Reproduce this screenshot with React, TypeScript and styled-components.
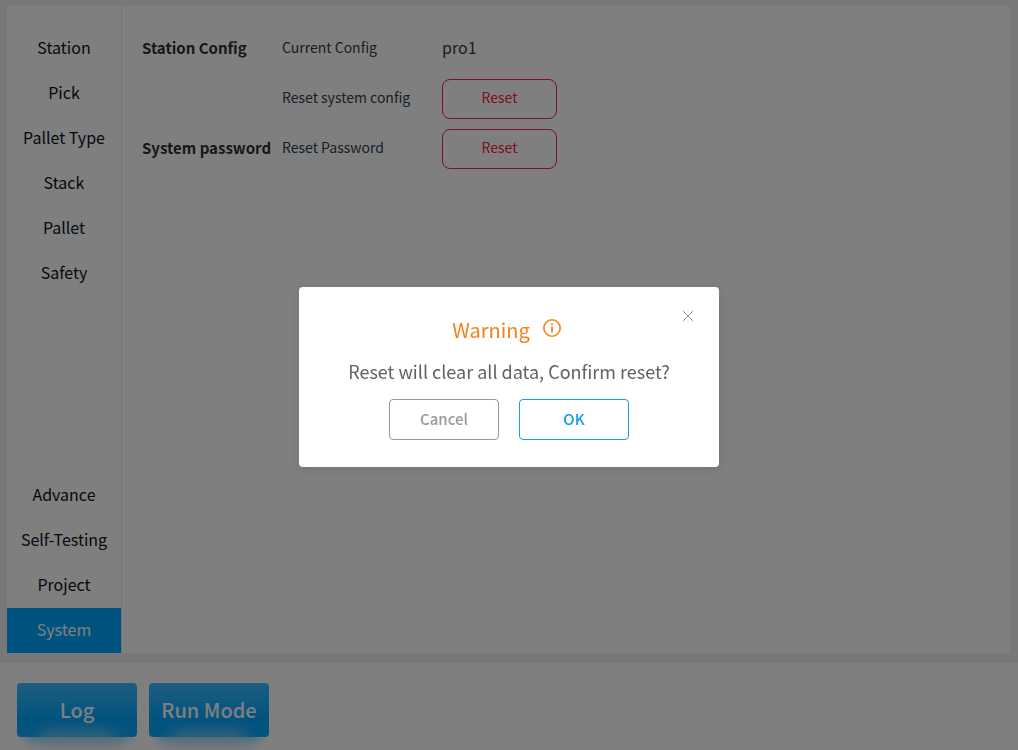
import React from "react";
import styled, { createGlobalStyle, css } from "styled-components";

const GlobalStyle = createGlobalStyle`
  *, *::before, *::after { box-sizing: border-box; }
  body {
    margin: 0;
    background: #f0f0f0;
    color: #2c3e50;
    font-family: "Noto Sans CJK SC", "Noto Sans", sans-serif;
  }
  button { font-family: inherit; cursor: pointer; }
`;

const Page = styled.div`
  display: flex;
  flex-direction: column;
  gap: 10px;
  min-height: 100vh;
  padding-top: 6px;
`;

const Workspace = styled.div`
  display: flex;
  flex: 1;
  margin: 0 8px 0 7px;
  background: #fff;
`;

const Sidebar = styled.nav`
  display: flex;
  flex-direction: column;
  justify-content: space-between;
  gap: 20px;
  width: 115px;
  padding-top: 20px;
  border-right: 1px solid #e6e6e6;
`;

const Menu = styled.div`
  display: flex;
  flex-direction: column;
`;

const MenuLink = styled.a<{ $active?: boolean }>`
  height: 45px;
  color: #0e1224;
  font-size: 16px;
  line-height: 42px;
  text-align: center;
  text-decoration: none;
  white-space: nowrap;
  ${(p) =>
    p.$active &&
    css`
      background: #00a6ff;
      color: #fff;
    `}
`;

const Settings = styled.main`
  flex: 1;
  padding: 18px 20px;
`;

const SettingRow = styled.div`
  display: grid;
  grid-template-columns: 140px 160px 115px;
  align-items: center;
  height: 50px;
`;

const GroupTitle = styled.h2`
  margin: 0;
  padding-bottom: 2px;
  color: #303030;
  font-size: 15px;
  font-weight: 700;
  line-height: 24px;
  white-space: nowrap;
`;

const SettingName = styled.span`
  grid-column: 2;
  padding-bottom: 4px;
  font-size: 14px;
  line-height: 24px;
`;

const SettingValue = styled.span`
  padding-bottom: 4px;
  font-size: 16px;
  line-height: 24px;
`;

const ResetButton = styled.button`
  height: 40px;
  padding: 0 0 4px;
  border: 1px solid #f5223d;
  border-radius: 8px;
  background: transparent;
  color: #f5223d;
  font-size: 14px;
`;

const Footer = styled.footer`
  display: flex;
  gap: 12px;
  padding: 20px 17px 13px;
  overflow: hidden;
  background: #fff;
`;

const ModeButton = styled.button`
  position: relative;
  width: 120px;
  height: 54px;
  padding: 0 0 2px;
  border: 0;
  border-radius: 4px;
  background: linear-gradient(180deg, #3dbcff 0%, #00a6ff 68%, #0ea9fb 100%);
  box-shadow: 0 14px 12px -10px rgba(0, 166, 255, 0.6);
  color: #fff;
  font-size: 20px;
  font-weight: 500;

  &::after {
    content: "";
    position: absolute;
    right: 22px;
    bottom: -13px;
    left: 22px;
    height: 20px;
    border-radius: 10px;
    background: rgba(200, 225, 238, 0.5);
    filter: blur(7px);
  }
`;

const Overlay = styled.div`
  position: fixed;
  inset: 0;
  display: flex;
  align-items: center;
  justify-content: center;
  padding-top: 4px;
  background: rgba(0, 0, 0, 0.5);
`;

const Dialog = styled.section`
  position: relative;
  display: flex;
  flex-direction: column;
  align-items: center;
  width: 420px;
  padding: 27px 20px;
  border-radius: 4px;
  background: #fff;
  box-shadow: 0 2px 12px rgba(0, 0, 0, 0.1);
`;

const DialogTitle = styled.h1`
  display: flex;
  gap: 12px;
  margin: 0;
  padding-right: 4px;
  color: #f08418;
  font-size: 20px;
  font-weight: 400;
  line-height: 32px;
`;

const Message = styled.p`
  margin: 9px 0 12px;
  color: #606266;
  font-size: 18px;
  line-height: 32px;
`;

const Actions = styled.div`
  display: flex;
  gap: 20px;
`;

const DialogButton = styled.button<{ $primary?: boolean }>`
  width: 110px;
  height: 41px;
  padding: 0 0 2px;
  border: 1px solid ${(p) => (p.$primary ? "#1a9fd8" : "#999")};
  border-radius: 4px;
  background: #fff;
  color: ${(p) => (p.$primary ? "#109fef" : "#999")};
  font-size: 15px;
  font-weight: 500;
`;

const CloseButton = styled.button`
  position: absolute;
  top: 20px;
  right: 22px;
  display: flex;
  padding: 4px;
  border: 0;
  background: none;
  color: #909399;
`;

const InfoIcon = () => (
  <svg width="20" height="28" viewBox="0 0 20 28" fill="none" stroke="currentColor" aria-hidden="true">
    <circle cx="10" cy="14" r="8.2" strokeWidth="1.6" />
    <path d="M10 12.5v6" strokeWidth="1.8" />
    <path d="M10 9.2v1.8" strokeWidth="1.8" />
  </svg>
);

const CloseIcon = () => (
  <svg width="10" height="10" viewBox="0 0 10 10" stroke="currentColor" aria-hidden="true">
    <path d="M0 0l10 10M10 0L0 10" />
  </svg>
);

const topMenu = ["Station", "Pick", "Pallet Type", "Stack", "Pallet", "Safety"];
const bottomMenu = ["Advance", "Self-Testing", "Project", "System"];

export default function App() {
  return (
    <>
      <GlobalStyle />
      <Page>
        <Workspace>
          <Sidebar>
            {[topMenu, bottomMenu].map((items) => (
              <Menu key={items[0]}>
                {items.map((name) => (
                  <MenuLink key={name} href="#" $active={name === "System"}>
                    {name}
                  </MenuLink>
                ))}
              </Menu>
            ))}
          </Sidebar>
          <Settings>
            <SettingRow>
              <GroupTitle>Station Config</GroupTitle>
              <SettingName>Current Config</SettingName>
              <SettingValue>pro1</SettingValue>
            </SettingRow>
            <SettingRow>
              <SettingName id="reset-config">Reset system config</SettingName>
              <ResetButton aria-describedby="reset-config">Reset</ResetButton>
            </SettingRow>
            <SettingRow>
              <GroupTitle>System password</GroupTitle>
              <SettingName id="reset-password">Reset Password</SettingName>
              <ResetButton aria-describedby="reset-password">Reset</ResetButton>
            </SettingRow>
          </Settings>
        </Workspace>
        <Footer>
          <ModeButton>Log</ModeButton>
          <ModeButton>Run Mode</ModeButton>
        </Footer>
      </Page>
      <Overlay>
        <Dialog role="alertdialog" aria-modal="true" aria-labelledby="dialog-title" aria-describedby="dialog-message">
          <DialogTitle id="dialog-title">
            Warning
            <InfoIcon />
          </DialogTitle>
          <Message id="dialog-message">Reset will clear all data, Confirm reset?</Message>
          <Actions>
            <DialogButton>Cancel</DialogButton>
            <DialogButton $primary>OK</DialogButton>
          </Actions>
          <CloseButton aria-label="Close">
            <CloseIcon />
          </CloseButton>
        </Dialog>
      </Overlay>
    </>
  );
}
